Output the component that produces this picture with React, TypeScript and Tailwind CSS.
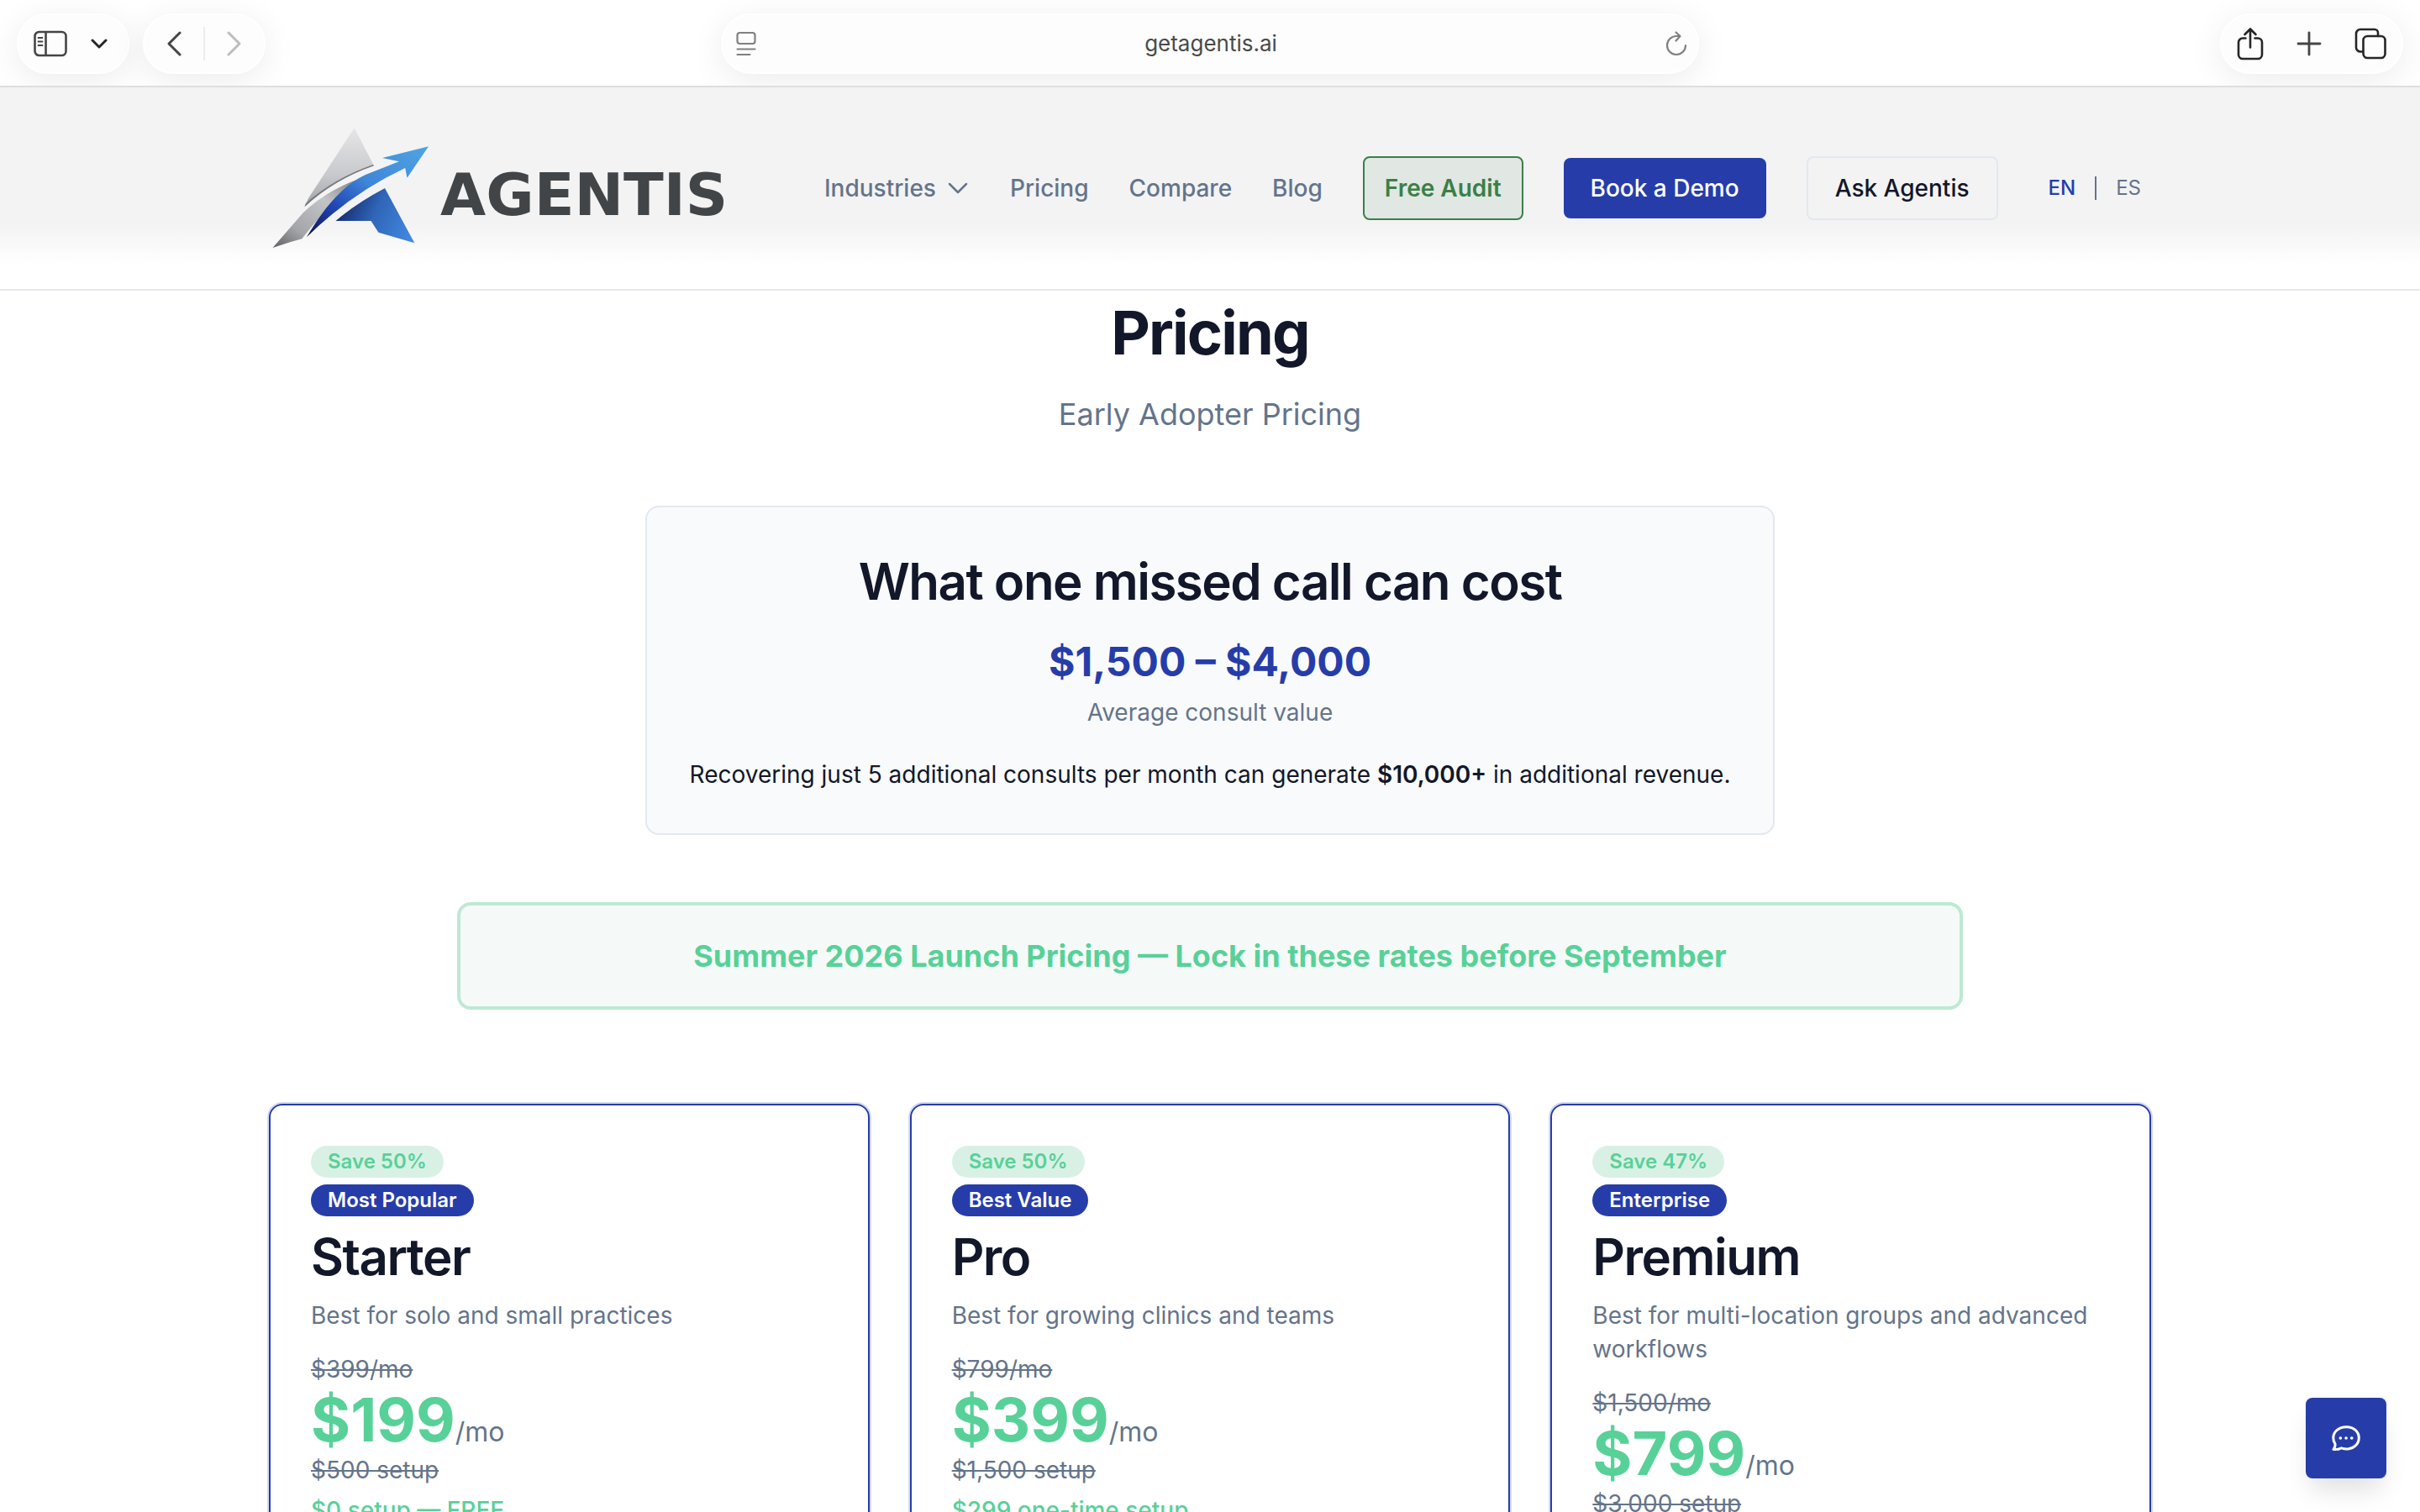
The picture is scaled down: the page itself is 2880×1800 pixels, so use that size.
import type { ReactNode } from 'react';

const navLinks = ['Pricing', 'Compare', 'Blog'];

const plans = [
  {
    name: 'Starter',
    save: 'Save 50%',
    tag: 'Most Popular',
    description: 'Best for solo and small practices',
    oldPrice: '$399/mo',
    price: '$199',
    oldSetup: '$500 setup',
    setup: '$0 setup — FREE',
  },
  {
    name: 'Pro',
    save: 'Save 50%',
    tag: 'Best Value',
    description: 'Best for growing clinics and teams',
    oldPrice: '$799/mo',
    price: '$399',
    oldSetup: '$1,500 setup',
    setup: '$299 one-time setup',
  },
  {
    name: 'Premium',
    save: 'Save 47%',
    tag: 'Enterprise',
    description: 'Best for multi-location groups and advanced workflows',
    oldPrice: '$1,500/mo',
    price: '$799',
    oldSetup: '$3,000 setup',
    setup: '$499 one-time setup',
  },
];

const Pill = ({ className, children }: { className: string; children: ReactNode }) => (
  <div className={`flex h-[72px] items-center rounded-full border-2 border-white bg-[#fdfdfd] shadow-[0_8px_40px_rgba(0,0,0,0.08)] ${className}`}>
    {children}
  </div>
);

const Toolbar = () => (
  <div className="grid h-[104px] shrink-0 grid-cols-[minmax(0,1fr)_41%_minmax(0,1fr)] items-start overflow-hidden border-b-2 border-[#dedede] bg-white px-5 pt-4">
    <div className="flex gap-4">
      <Pill className="w-[134px] justify-between pl-[18px] pr-6">
        <button aria-label="Show sidebar">
          <svg width="40" height="32" viewBox="0 0 40 32" fill="none" stroke="#454545" strokeWidth="2.6">
            <rect x="1.5" y="2" width="37" height="28" rx="5" />
            <path d="M14.5 2v28" />
            <path d="M5.5 9h5M5.5 13.500h5M5.5 18h5" strokeWidth="1.8" strokeLinecap="round" />
          </svg>
        </button>
        <button aria-label="Tab groups">
          <svg width="20" height="14" viewBox="0 0 20 14" fill="none" stroke="#262626" strokeWidth="3" strokeLinecap="round" strokeLinejoin="round">
            <path d="M2 3l8 8 8-8" />
          </svg>
        </button>
      </Pill>
      <Pill className="w-[146px] justify-between px-[26px]">
        <button aria-label="Back">
          <svg width="18" height="30" viewBox="0 0 18 30" fill="none" stroke="#454545" strokeWidth="3" strokeLinecap="round" strokeLinejoin="round">
            <path d="M16 2L3 15l13 13" />
          </svg>
        </button>
        <span className="h-10 w-0.5 bg-[#ececec]" />
        <button aria-label="Forward">
          <svg width="18" height="30" viewBox="0 0 18 30" fill="none" stroke="#bdbdbd" strokeWidth="3" strokeLinecap="round" strokeLinejoin="round">
            <path d="M2 2l13 13L2 28" />
          </svg>
        </button>
      </Pill>
    </div>
    <Pill className="justify-between pr-3 pl-4">
      <button aria-label="Page menu">
        <svg width="24" height="30" viewBox="0 0 24 30" fill="none" stroke="#808080" strokeWidth="2.2" strokeLinecap="round">
          <rect x="1.5" y="2" width="21" height="13" rx="3" />
          <path d="M1.5 21.500h21M1.500 28h15" />
        </svg>
      </button>
      <input
        aria-label="Address"
        defaultValue="getagentis.ai"
        className="min-w-0 flex-1 bg-transparent text-center text-[26px] leading-8 text-[#4a4a4a] outline-none"
      />
      <button aria-label="Reload">
        <svg width="26" height="30" viewBox="0 0 26 30" fill="none" stroke="#808080" strokeWidth="2.2" strokeLinecap="round" strokeLinejoin="round">
          <path d="M24 17a11 11 0 1 1-11-11h4" />
          <path d="M12.500 1.500l5 4.500-5 5.500" />
        </svg>
      </button>
    </Pill>
    <div className="flex justify-end">
      <Pill className="w-[218px] justify-between px-[18px]">
        <button aria-label="Share">
          <svg width="32" height="40" viewBox="0 0 32 40" fill="none" stroke="#262626" strokeWidth="2.6" strokeLinecap="round" strokeLinejoin="round">
            <path d="M10.500 13.500H7a5 5 0 0 0-5 5V33a5 5 0 0 0 5 5h18a5 5 0 0 0 5-5V18.500a5 5 0 0 0-5-5h-3.500" />
            <path d="M16 24.500V3M9.500 9L16 2.500 22.500 9" />
          </svg>
        </button>
        <button aria-label="New tab">
          <svg width="30" height="30" viewBox="0 0 30 30" fill="none" stroke="#454545" strokeWidth="2.8" strokeLinecap="round">
            <path d="M15 2v26M2 15h26" />
          </svg>
        </button>
        <button aria-label="Tab overview">
          <svg width="38" height="38" viewBox="0 0 38 38" fill="none" stroke="#262626" strokeWidth="2.6" strokeLinecap="round">
            <rect x="10.500" y="10" width="26" height="26" rx="5" />
            <path d="M10 28.500H7a5 5 0 0 1-5-5V7a5 5 0 0 1 5-5h17a4 4 0 0 1 4 4v4" />
          </svg>
        </button>
      </Pill>
    </div>
  </div>
);

const Logo = () => (
  <a href="#home" className="flex items-center gap-3 pl-0.5">
    <svg width="190" height="148" viewBox="0 0 190 148">
      <defs>
        <linearGradient id="silverTop" x1="0" y1="0" x2="0" y2="1">
          <stop offset="0" stopColor="#e6e6e8" />
          <stop offset="0.6" stopColor="#c8c9cc" />
          <stop offset="1" stopColor="#a0a1a4" />
        </linearGradient>
        <linearGradient id="silverTail" x1="1" y1="0" x2="0" y2="1">
          <stop offset="0" stopColor="#6d6e72" />
          <stop offset="0.4" stopColor="#c2c4c8" />
          <stop offset="0.75" stopColor="#a3a5a8" />
          <stop offset="1" stopColor="#5f6062" />
        </linearGradient>
        <linearGradient id="arrow" x1="0" y1="1" x2="1" y2="0">
          <stop offset="0" stopColor="#0d1445" />
          <stop offset="0.28" stopColor="#1f46b4" />
          <stop offset="0.55" stopColor="#3f86d8" />
          <stop offset="1" stopColor="#4fa5e2" />
        </linearGradient>
        <linearGradient id="leg" x1="0" y1="0.5" x2="1" y2="0.8">
          <stop offset="0" stopColor="#152a6c" />
          <stop offset="0.45" stopColor="#2f66b8" />
          <stop offset="1" stopColor="#4288e0" />
        </linearGradient>
      </defs>
      <path d="M99.700 2.300L123 47.300Q75 64 40.400 96.300L45 86Z" fill="url(#silverTop)" />
      <path d="M123 47.300Q75 64 40.400 96.300L42 92Q76 62 122 46Z" fill="#77787b" />
      <path d="M2.500 145L39 103Q72 72 118 59Q74 86 37.300 134.300L24 138Z" fill="url(#silverTail)" />
      <path d="M43 132.300C60 103 85 70 113 58L152.900 42.300 133 38 188 24.300 162.500 61.700 160.200 50Q96 80 43 132.300Z" fill="url(#arrow)" />
      <path d="M136 74L171.300 139.300 128.400 126.700 119.600 113H77.500Q102 92 136 74Z" fill="url(#leg)" />
    </svg>
    <span className="pt-4 font-['DejaVu_Sans',sans-serif] text-[70px] leading-[72px] font-bold text-[#424548]">AGENTIS</span>
  </a>
);

const Header = () => (
  <header className="h-[242px] shrink-0 border-b-2 border-slate-200 bg-linear-to-b from-[#f3f3f4] from-68% to-white to-88%">
    <div className="mx-auto flex h-full max-w-[2240px] items-center justify-between">
      <Logo />
      <nav className="flex items-center gap-12 text-[28px] leading-10 font-medium text-[#64748b]">
        <button className="flex items-center gap-3">
          Industries
          <svg width="28" height="28" viewBox="0 0 28 28" fill="none" stroke="currentColor" strokeWidth="2.5" strokeLinecap="round" strokeLinejoin="round">
            <path d="M4 9l10 10L24 9" />
          </svg>
        </button>
        {navLinks.map((link) => (
          <a key={link} href={`#${link.toLowerCase()}`}>
            {link}
          </a>
        ))}
        <a href="#audit" className="rounded-lg border-2 border-[#3a8046] bg-[#e1e7e3] px-6 py-4 font-semibold text-[#3a8046]">
          Free Audit
        </a>
        <button className="rounded-lg bg-[#263da9] px-8 py-4 text-white">Book a Demo</button>
        <button className="rounded-lg border-2 border-slate-200 px-8 py-4 text-[#12172a]">Ask Agentis</button>
        <div className="flex items-center text-2xl">
          <button className="px-3 text-[#263da9]">EN</button>
          <span className="mx-[11px] h-7 w-0.5 bg-[#64748b]" />
          <button className="px-3 font-normal">ES</button>
        </div>
      </nav>
    </div>
  </header>
);

const PlanCard = ({ plan }: { plan: (typeof plans)[number] }) => (
  <article className="flex flex-col items-start rounded-2xl border-2 border-[#263da9] p-12 text-[28px] leading-10 text-[#64748b] ring-2 ring-[#263da9]/20">
    <span className="rounded-full bg-[#d9f1e5] px-5 text-2xl leading-[38px] font-semibold text-[#58d198]">{plan.save}</span>
    <span className="mt-2 rounded-full bg-[#263da9] px-5 text-2xl leading-[38px] font-semibold text-white">{plan.tag}</span>
    <h3 className="mt-3 text-[60px] leading-[72px] font-semibold tracking-tight text-[#12172a]">{plan.name}</h3>
    <p className="mt-3.5">{plan.description}</p>
    <p className="mt-6 line-through">{plan.oldPrice}</p>
    <p>
      <span className="text-[72px] leading-[80px] font-bold text-[#58d198]">{plan.price}</span>
      <span className="text-[32px] leading-8">/mo</span>
    </p>
    <p className="line-through">{plan.oldSetup}</p>
    <p className="mt-2 font-medium text-[#58d198]">{plan.setup}</p>
  </article>
);

const App = () => {
  return (
    <div className="relative flex h-screen flex-col overflow-hidden bg-white font-[Inter,'Liberation_Sans',sans-serif]">
      <Toolbar />
      <Header />
      <main className="min-h-0 flex-1 overflow-hidden">
        <div className="mx-auto max-w-[2240px] pt-1.5 text-center">
          <h1 className="text-[72px] leading-[88px] font-bold tracking-tight text-[#12172a]">Pricing</h1>
          <p className="mt-6 text-4xl leading-[58px] text-[#64748b]">Early Adopter Pricing</p>

          <section className="mx-auto mt-20 max-w-[1344px] rounded-2xl border-2 border-slate-200 bg-[#f9fafc] pt-12 pb-[50px] text-[28px] leading-10">
            <h2 className="text-[60px] leading-[80px] font-semibold tracking-tight text-[#12172a]">What one missed call can cost</h2>
            <p className="mt-6 text-5xl leading-[64px] font-bold text-[#263da9]">$1,500 – $4,000</p>
            <p className="mt-2 text-[#64748b]">Average consult value</p>
            <p className="mt-[34px] text-[#12172a]">
              Recovering just 5 additional consults per month can generate <strong className="font-semibold">$10,000+</strong> in additional revenue.
            </p>
          </section>

          <p className="mx-auto mt-20 max-w-[1792px] rounded-2xl border-4 border-[#bde9d5] bg-[#f5faf8] py-8 text-4xl leading-[56px] font-bold text-[#58d198]">
            Summer 2026 Launch Pricing — Lock in these rates before September
          </p>

          <div className="mt-28 grid grid-cols-3 gap-12 text-left">
            {plans.map((plan) => (
              <PlanCard key={plan.name} plan={plan} />
            ))}
          </div>
        </div>
      </main>
      <button
        aria-label="Open chat"
        className="absolute right-10 bottom-10 flex size-24 items-center justify-center rounded-lg bg-[#263da9] text-white shadow-[0_20px_30px_-6px_rgba(0,0,0,0.12)]"
      >
        <svg width="34" height="30" viewBox="0 0 34 30" fill="none" stroke="currentColor" strokeWidth="3" strokeLinejoin="round">
          <path d="M17.500 1.700C26 1.700 32.300 7.300 32.300 14.800S26 28 17.500 28c-2.500 0-4.400-.6-6.100-1.200-2.500 1.300-5.900 1.900-9.400 1.600 1.800-2.200 2.400-4.700 1.900-6.700-1.400-2.100-2.100-4.300-2.100-6.900C1.800 7.300 8.500 1.700 17.500 1.700Z" />
          <path d="M10.300 15h.1M17 15h.1M23.700 15h.1" strokeWidth="3.6" strokeLinecap="round" />
        </svg>
      </button>
    </div>
  );
};

export default App;
